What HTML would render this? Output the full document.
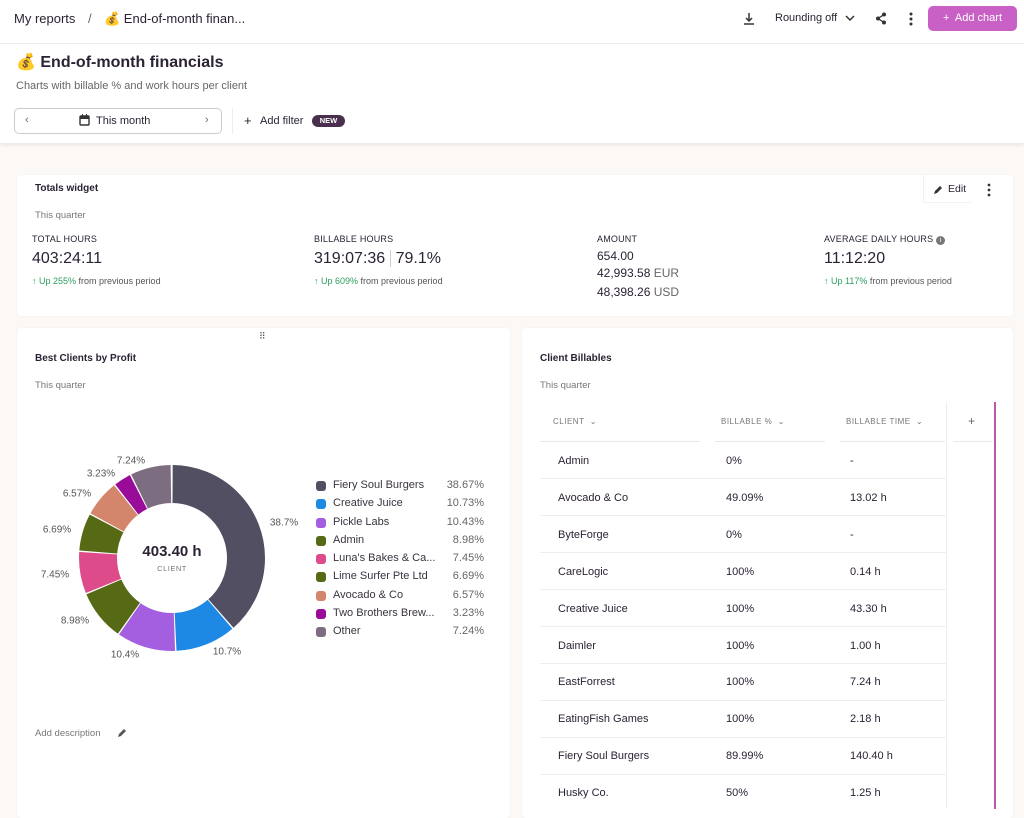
<!DOCTYPE html>
<html><head><meta charset="utf-8"><style>
*{box-sizing:border-box;margin:0;padding:0}
body{width:1024px;height:809px;overflow:hidden;background:#fcf8f6;font-family:"Liberation Sans",sans-serif;color:#2b2233;position:relative}
.a{position:absolute;white-space:nowrap}
.hdr{position:absolute;left:0;top:0;width:1024px;height:143px;background:#fff;box-shadow:0 2px 4px rgba(0,0,0,.08)}
.card{position:absolute;background:#fff;border-radius:4px;box-shadow:0 0 2px rgba(0,0,0,.05)}
.lbl{font-size:9px;color:#2b2233;letter-spacing:.2px}
.big{font-size:16px;color:#2b2233}
.up{font-size:9px;color:#555}
.up b{color:#2e9e5e;font-weight:normal}
.sm{font-size:9.5px;color:#777}
.leg{font-size:11px;color:#3a3340}
.dot{position:absolute;width:10px;height:10px;border-radius:3px}
.pl{font-size:10px;color:#555;position:absolute;transform:translate(-50%,-50%)}
.row{position:absolute;left:540px;width:406px;height:1px;background:#eee}
.cell{position:absolute;font-size:11px;color:#2b2233}
</style></head><body>
<div class="hdr"></div>
<div style="position:absolute;left:0;top:43px;width:1024px;height:1px;background:#eee"></div>
<div class="a" style="left:14px;top:11px;font-size:13px">My reports</div>
<div class="a" style="left:88px;top:11px;font-size:13px;color:#666">/</div>
<div class="a" style="left:104px;top:11px;font-size:13px">💰 End-of-month finan...</div>
<svg class="a" style="left:743px;top:12px" width="12" height="13" viewBox="0 0 12 13"><path d="M6 1v8M3 6l3 3 3-3M1 12h10" stroke="#333" stroke-width="1.5" fill="none"/></svg>
<div class="a" style="left:775px;top:12px;font-size:11px">Rounding off</div>
<svg class="a" style="left:845px;top:14px" width="10" height="8"><path d="M1 2l4 4 4-4" stroke="#333" stroke-width="1.5" fill="none"/></svg>
<svg class="a" style="left:875px;top:12px" width="12" height="13"><circle cx="9" cy="2.5" r="2" fill="#333"/><circle cx="3" cy="6.5" r="2" fill="#333"/><circle cx="9" cy="10.5" r="2" fill="#333"/><path d="M9 2.5L3 6.5 9 10.5" stroke="#333" stroke-width="1.3" fill="none"/></svg>
<svg class="a" style="left:908px;top:12px" width="6" height="14"><circle cx="3" cy="2" r="1.5" fill="#333"/><circle cx="3" cy="7" r="1.5" fill="#333"/><circle cx="3" cy="12" r="1.5" fill="#333"/></svg>
<div class="a" style="left:928px;top:6px;width:89px;height:25px;background:#c960c6;border-radius:5px;color:#fff;font-size:11px;line-height:25px;text-align:center">+&nbsp; Add chart</div>
<div class="a" style="left:16px;top:52px;font-size:16px;font-weight:bold;color:#2b2233">💰 End-of-month financials</div>
<div class="a" style="left:16px;top:80px;font-size:11px;color:#666">Charts with billable % and work hours per client</div>
<div class="a" style="left:14px;top:108px;width:208px;height:26px;border:1px solid #ccc;border-radius:5px"></div>
<div class="a" style="left:25px;top:114px;font-size:11px;color:#666">‹</div>
<div class="a" style="left:205px;top:114px;font-size:11px;color:#666">›</div>
<svg class="a" style="left:79px;top:114px" width="11" height="12"><rect x="1" y="2" width="9" height="9" rx="1" fill="none" stroke="#333" stroke-width="1.4"/><rect x="1" y="2" width="9" height="3" fill="#333"/><path d="M3.5 0v3M7.5 0v3" stroke="#333"/></svg>
<div class="a" style="left:96px;top:115px;font-size:11px">This month</div>
<div class="a" style="left:232px;top:108px;width:1px;height:26px;background:#eee"></div>
<div class="a" style="left:244px;top:113px;font-size:13px">+</div>
<div class="a" style="left:260px;top:115px;font-size:11px">Add filter</div>
<div class="a" style="left:312px;top:115px;width:33px;height:12px;border-radius:6px;background:#4a2e4e;color:#fff;font-size:7.5px;line-height:12px;text-align:center;font-weight:bold">NEW</div>

<div class="card" style="left:17px;top:175px;width:996px;height:141px"></div>
<div class="a" style="left:35px;top:183px;font-size:10px;font-weight:bold">Totals widget</div>
<div class="a" style="left:923px;top:175px;width:48px;height:28px;border-left:1px solid #f2f2f2;border-bottom:1px solid #f2f2f2"></div>
<svg class="a" style="left:933px;top:185px" width="10" height="10"><path d="M1 9l1-3 5-5 2 2-5 5z" fill="#333"/></svg>
<div class="a" style="left:948px;top:183px;font-size:10.5px">Edit</div>
<svg class="a" style="left:986px;top:183px" width="6" height="14"><circle cx="3" cy="2" r="1.4" fill="#333"/><circle cx="3" cy="7" r="1.4" fill="#333"/><circle cx="3" cy="12" r="1.4" fill="#333"/></svg>
<div class="a sm" style="left:35px;top:210px">This quarter</div>
<div class="a lbl" style="left:32px;top:234px">TOTAL HOURS</div>
<div class="a big" style="left:32px;top:250px">403:24:11</div>
<div class="a up" style="left:32px;top:276px"><b>↑ Up 255%</b> from previous period</div>
<div class="a lbl" style="left:314px;top:234px">BILLABLE HOURS</div>
<div class="a big" style="left:314px;top:250px">319:07:36 <span style="border-left:1px solid #ccc;padding-left:5px">79.1%</span></div>
<div class="a up" style="left:314px;top:276px"><b>↑ Up 609%</b> from previous period</div>
<div class="a lbl" style="left:597px;top:234px">AMOUNT</div>
<div class="a" style="left:597px;top:249px;font-size:12px">654.00</div>
<div class="a" style="left:597px;top:266px;font-size:12px">42,993.58 <span style="color:#666">EUR</span></div>
<div class="a" style="left:597px;top:285px;font-size:12px">48,398.26 <span style="color:#666">USD</span></div>
<div class="a lbl" style="left:824px;top:234px">AVERAGE DAILY HOURS <span style="display:inline-block;width:9px;height:9px;border-radius:50%;background:#777;color:#fff;font-size:7px;text-align:center;line-height:9px">i</span></div>
<div class="a big" style="left:824px;top:250px">11:12:20</div>
<div class="a up" style="left:824px;top:276px"><b>↑ Up 117%</b> from previous period</div>

<div class="card" style="left:17px;top:328px;width:493px;height:490px"></div>
<div class="a" style="left:259px;top:331px;font-size:9px;color:#555;letter-spacing:-1px">⠿</div>
<div class="a" style="left:35px;top:353px;font-size:10px;font-weight:bold">Best Clients by Profit</div>
<div class="a sm" style="left:35px;top:380px">This quarter</div>
<svg class="a" style="left:0;top:0" width="510" height="700">
<g transform="rotate(-90 172 558)" fill="none" stroke-width="38">
<circle cx="172" cy="558" r="74" pathLength="100" stroke="#524f62" stroke-dasharray="38.67 61.33" stroke-dashoffset="0"/>
<circle cx="172" cy="558" r="74" pathLength="100" stroke="#1e88e5" stroke-dasharray="10.73 89.27" stroke-dashoffset="-38.67"/>
<circle cx="172" cy="558" r="74" pathLength="100" stroke="#a35fe0" stroke-dasharray="10.43 89.57" stroke-dashoffset="-49.4"/>
<circle cx="172" cy="558" r="74" pathLength="100" stroke="#566914" stroke-dasharray="8.98 91.02" stroke-dashoffset="-59.83"/>
<circle cx="172" cy="558" r="74" pathLength="100" stroke="#de4b8b" stroke-dasharray="7.45 92.55" stroke-dashoffset="-68.81"/>
<circle cx="172" cy="558" r="74" pathLength="100" stroke="#566914" stroke-dasharray="6.69 93.31" stroke-dashoffset="-76.26"/>
<circle cx="172" cy="558" r="74" pathLength="100" stroke="#d4866d" stroke-dasharray="6.57 93.43" stroke-dashoffset="-82.95"/>
<circle cx="172" cy="558" r="74" pathLength="100" stroke="#990c99" stroke-dasharray="3.23 96.77" stroke-dashoffset="-89.52"/>
<circle cx="172" cy="558" r="74" pathLength="100" stroke="#7d6d80" stroke-dasharray="7.25 92.75" stroke-dashoffset="-92.75"/>
<circle cx="172" cy="558" r="74" pathLength="100" stroke="#fff" stroke-width="40" stroke-dasharray="0.25 38.42 0.25 10.48 0.25 10.18 0.25 8.73 0.25 7.2 0.25 6.44 0.25 6.32 0.25 2.98 0.25 7.0" stroke-dashoffset="0.12"/>
</g>
<text x="172" y="556" text-anchor="middle" font-size="15" font-weight="bold" fill="#2b2233" font-family="Liberation Sans">403.40 h</text>
<text x="172" y="571" text-anchor="middle" font-size="7.5" fill="#777" font-family="Liberation Sans" letter-spacing=".5">CLIENT</text>
</svg>
<div class="pl" style="left:284px;top:523px">38.7%</div>
<div class="pl" style="left:227px;top:652px">10.7%</div>
<div class="pl" style="left:125px;top:655px">10.4%</div>
<div class="pl" style="left:75px;top:621px">8.98%</div>
<div class="pl" style="left:55px;top:575px">7.45%</div>
<div class="pl" style="left:57px;top:530px">6.69%</div>
<div class="pl" style="left:77px;top:494px">6.57%</div>
<div class="pl" style="left:101px;top:474px">3.23%</div>
<div class="pl" style="left:131px;top:461px">7.24%</div>
<div class="a" style="left:316px;top:479px;width:170px">
<div style="position:relative;height:18.3px"><span class="dot" style="left:0;top:2px;background:#524f62"></span><span class="leg" style="position:absolute;left:17px">Fiery Soul Burgers</span><span class="leg" style="position:absolute;right:2px;color:#666">38.67%</span></div>
<div style="position:relative;height:18.3px"><span class="dot" style="left:0;top:2px;background:#1e88e5"></span><span class="leg" style="position:absolute;left:17px">Creative Juice</span><span class="leg" style="position:absolute;right:2px;color:#666">10.73%</span></div>
<div style="position:relative;height:18.3px"><span class="dot" style="left:0;top:2px;background:#a35fe0"></span><span class="leg" style="position:absolute;left:17px">Pickle Labs</span><span class="leg" style="position:absolute;right:2px;color:#666">10.43%</span></div>
<div style="position:relative;height:18.3px"><span class="dot" style="left:0;top:2px;background:#566914"></span><span class="leg" style="position:absolute;left:17px">Admin</span><span class="leg" style="position:absolute;right:2px;color:#666">8.98%</span></div>
<div style="position:relative;height:18.3px"><span class="dot" style="left:0;top:2px;background:#de4b8b"></span><span class="leg" style="position:absolute;left:17px">Luna's Bakes &amp; Ca...</span><span class="leg" style="position:absolute;right:2px;color:#666">7.45%</span></div>
<div style="position:relative;height:18.3px"><span class="dot" style="left:0;top:2px;background:#566914"></span><span class="leg" style="position:absolute;left:17px">Lime Surfer Pte Ltd</span><span class="leg" style="position:absolute;right:2px;color:#666">6.69%</span></div>
<div style="position:relative;height:18.3px"><span class="dot" style="left:0;top:2px;background:#d4866d"></span><span class="leg" style="position:absolute;left:17px">Avocado &amp; Co</span><span class="leg" style="position:absolute;right:2px;color:#666">6.57%</span></div>
<div style="position:relative;height:18.3px"><span class="dot" style="left:0;top:2px;background:#990c99"></span><span class="leg" style="position:absolute;left:17px">Two Brothers Brew...</span><span class="leg" style="position:absolute;right:2px;color:#666">3.23%</span></div>
<div style="position:relative;height:18.3px"><span class="dot" style="left:0;top:2px;background:#7d6d80"></span><span class="leg" style="position:absolute;left:17px">Other</span><span class="leg" style="position:absolute;right:2px;color:#666">7.24%</span></div>
</div>
<div class="a sm" style="left:35px;top:728px">Add description</div>
<svg class="a" style="left:117px;top:728px" width="10" height="10"><path d="M1 9l1-3 5-5 2 2-5 5z" fill="#555"/></svg>

<div class="card" style="left:522px;top:328px;width:491px;height:490px"></div>
<div class="a" style="left:540px;top:353px;font-size:10px;font-weight:bold">Client Billables</div>
<div class="a sm" style="left:540px;top:380px">This quarter</div>
<div class="a" style="left:994px;top:402px;width:2px;height:407px;background:#b85aa8"></div>
<div class="a" style="left:946px;top:402px;width:1px;height:407px;background:#eee"></div>
<div class="a" style="left:553px;top:417px;font-size:8px;color:#777;letter-spacing:.5px">CLIENT &nbsp;⌄</div>
<div class="a" style="left:721px;top:417px;font-size:8px;color:#777;letter-spacing:.5px">BILLABLE % &nbsp;⌄</div>
<div class="a" style="left:846px;top:417px;font-size:8px;color:#777;letter-spacing:.5px">BILLABLE TIME &nbsp;⌄</div>
<div class="a" style="left:968px;top:414px;font-size:12px;color:#666">+</div>
<div class="a" style="left:540px;top:441px;width:160px;height:1px;background:#e8e8e8"></div>
<div class="a" style="left:715px;top:441px;width:110px;height:1px;background:#e8e8e8"></div>
<div class="a" style="left:840px;top:441px;width:105px;height:1px;background:#e8e8e8"></div>
<div class="a" style="left:953px;top:441px;width:40px;height:1px;background:#e8e8e8"></div>
<div class="row" style="top:478px"></div><div class="row" style="top:515px"></div><div class="row" style="top:552px"></div><div class="row" style="top:589px"></div><div class="row" style="top:626px"></div><div class="row" style="top:663px"></div><div class="row" style="top:700px"></div><div class="row" style="top:737px"></div><div class="row" style="top:774px"></div>
<div class="cell" style="left:558px;top:455px">Admin</div><div class="cell" style="left:726px;top:455px">0%</div><div class="cell" style="left:850px;top:455px">-</div>
<div class="cell" style="left:558px;top:492px">Avocado &amp; Co</div><div class="cell" style="left:726px;top:492px">49.09%</div><div class="cell" style="left:850px;top:492px">13.02 h</div>
<div class="cell" style="left:558px;top:529px">ByteForge</div><div class="cell" style="left:726px;top:529px">0%</div><div class="cell" style="left:850px;top:529px">-</div>
<div class="cell" style="left:558px;top:566px">CareLogic</div><div class="cell" style="left:726px;top:566px">100%</div><div class="cell" style="left:850px;top:566px">0.14 h</div>
<div class="cell" style="left:558px;top:603px">Creative Juice</div><div class="cell" style="left:726px;top:603px">100%</div><div class="cell" style="left:850px;top:603px">43.30 h</div>
<div class="cell" style="left:558px;top:640px">Daimler</div><div class="cell" style="left:726px;top:640px">100%</div><div class="cell" style="left:850px;top:640px">1.00 h</div>
<div class="cell" style="left:558px;top:676px">EastForrest</div><div class="cell" style="left:726px;top:676px">100%</div><div class="cell" style="left:850px;top:676px">7.24 h</div>
<div class="cell" style="left:558px;top:713px">EatingFish Games</div><div class="cell" style="left:726px;top:713px">100%</div><div class="cell" style="left:850px;top:713px">2.18 h</div>
<div class="cell" style="left:558px;top:750px">Fiery Soul Burgers</div><div class="cell" style="left:726px;top:750px">89.99%</div><div class="cell" style="left:850px;top:750px">140.40 h</div>
<div class="cell" style="left:558px;top:787px">Husky Co.</div><div class="cell" style="left:726px;top:787px">50%</div><div class="cell" style="left:850px;top:787px">1.25 h</div>
</body></html>
